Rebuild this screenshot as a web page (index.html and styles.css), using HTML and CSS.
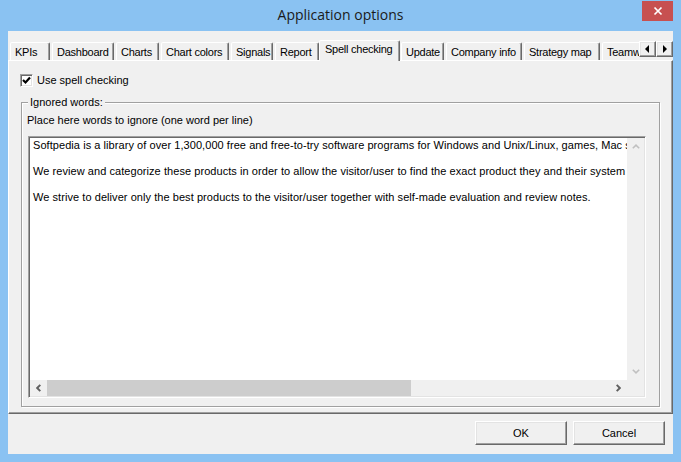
FILE: index.html
```html
<!DOCTYPE html>
<html>
<head>
<meta charset="utf-8">
<title>Application options</title>
<link rel="stylesheet" href="styles.css">
</head>
<body>
<div class="window">
  <div class="titlebar">
    <div class="title">Application options</div>
    <button class="close" aria-label="Close">
      <svg width="10" height="10" viewBox="0 0 10 10"><path d="M1.5 1.5 L8.5 8.5 M8.5 1.5 L1.5 8.5" stroke="#fff" stroke-width="1.7" fill="none"/></svg>
    </button>
  </div>
  <div class="client">
    <div class="tabstrip">
      <div class="tabs">
        <div class="tab">KPIs</div>
        <div class="tab">Dashboard</div>
        <div class="tab">Charts</div>
        <div class="tab">Chart colors</div>
        <div class="tab">Signals</div>
        <div class="tab">Report</div>
        <div class="tab active">Spell checking</div>
        <div class="tab">Update</div>
        <div class="tab">Company info</div>
        <div class="tab">Strategy map</div>
        <div class="tab">Teamwork</div>
      </div>
      <div class="tabnav">
        <button class="navbtn" aria-label="Previous"><svg width="5" height="8" viewBox="0 0 5 8"><path d="M4 0 L0 4 L4 8 Z" fill="#000"/></svg></button>
        <button class="navbtn" aria-label="Next"><svg width="5" height="8" viewBox="0 0 5 8"><path d="M1 0 L5 4 L1 8 Z" fill="#000"/></svg></button>
      </div>
    </div>
    <div class="panel">
      <label class="check">
        <span class="box"><svg width="9" height="9" viewBox="0 0 9 9"><path d="M1 4 L3.5 6.5 L8 1.5" stroke="#000" stroke-width="2.2" fill="none"/></svg></span>
        <span>Use spell checking</span>
      </label>
      <fieldset class="group">
        <legend>Ignored words:</legend>
        <div class="hint">Place here words to ignore (one word per line)</div>
        <div class="memo">
          <div class="memo-text">
            <p>Softpedia is a library of over 1,300,000 free and free-to-try software programs for Windows and Unix/Linux, games, Mac software, Windows drivers, mobile devices and IT-related articles.</p>
            <p>We review and categorize these products in order to allow the visitor/user to find the exact product they and their system needs.</p>
            <p>We strive to deliver only the best products to the visitor/user together with self-made evaluation and review notes.</p>
          </div>
          <div class="vscroll">
            <span class="sbtn"><svg width="8" height="5" viewBox="0 0 8 5"><path d="M0.8 4.3 L4 1.2 L7.2 4.3" stroke="#c0c0c0" stroke-width="1.6" fill="none"/></svg></span>
            <span class="sbtn"><svg width="8" height="5" viewBox="0 0 8 5"><path d="M0.8 0.7 L4 3.8 L7.2 0.7" stroke="#c0c0c0" stroke-width="1.6" fill="none"/></svg></span>
          </div>
          <div class="hscroll">
            <span class="sbtn"><svg width="5" height="8" viewBox="0 0 5 8"><path d="M4.3 0.8 L1.2 4 L4.3 7.2" stroke="#606060" stroke-width="1.9" fill="none"/></svg></span>
            <span class="thumb"></span>
            <span class="track"></span>
            <span class="sbtn"><svg width="5" height="8" viewBox="0 0 5 8"><path d="M0.7 0.8 L3.8 4 L0.7 7.2" stroke="#606060" stroke-width="1.9" fill="none"/></svg></span>
          </div>
          <div class="corner"></div>
        </div>
      </fieldset>
    </div>
    <div class="footer">
      <button class="btn">OK</button>
      <button class="btn">Cancel</button>
    </div>
  </div>
</div>
</body>
</html>
```

FILE: styles.css
```css
* { box-sizing: border-box; }

body {
  margin: 0;
  background: #8ac2f2;
}

.window {
  width: 681px;
  height: 462px;
  background: #8ac2f2;
  padding: 0 8px 8px;
  display: flex;
  flex-direction: column;
  font-family: "Liberation Sans", Arial, sans-serif;
  font-size: 11px;
  color: #000;
}

/* ---------- title bar ---------- */
.titlebar {
  height: 31px;
  flex: none;
  display: grid;
  grid-template-columns: 1fr auto 1fr;
}

.title {
  grid-column: 2;
  font-family: "Open Sans", "Noto Sans", sans-serif;
  font-size: 14px;
  line-height: 30px;
  color: #1a1a1a;
  white-space: nowrap;
}

.close {
  grid-column: 3;
  justify-self: end;
  align-self: start;
  margin-top: 1px;
  width: 31px;
  height: 20px;
  border: 0;
  padding: 0;
  background: #c75050;
  display: flex;
  align-items: center;
  justify-content: center;
}

/* ---------- client ---------- */
.client {
  flex: 1;
  background: #f0f0f0;
  display: flex;
  flex-direction: column;
}

.tabstrip {
  height: 30px;
  margin-bottom: -1px;
  display: flex;
  flex: none;
  padding-left: 2px;
}

.tabs {
  flex: 1;
  min-width: 0;
  display: flex;
  align-items: flex-start;
  overflow: hidden;
  height: 30px;
}

.tab {
  flex: none;
  height: 18px;
  margin-top: 11px;
  margin-right: 2px;
  padding: 1px 0 0 4px;
  border: 1px solid;
  border-bottom: 0;
  border-color: #fff #696969 transparent #fff;
  border-radius: 2px 2px 0 0;
  box-shadow: inset -1px 0 0 #a0a0a0;
  background: #f0f0f0;
  line-height: 16px;
  letter-spacing: -0.25px;
  white-space: nowrap;
  overflow: hidden;
}

.tab:nth-child(1) { width: 40px; }
.tab:nth-child(2) { width: 62px; }
.tab:nth-child(3) { width: 43px; }
.tab:nth-child(4) { width: 68px; }
.tab:nth-child(5) { width: 42px; }
.tab:nth-child(6) { width: 44px; }
.tab:nth-child(8) { width: 43px; }
.tab:nth-child(9) { width: 76px; }
.tab:nth-child(10) { width: 76px; }
.tab:nth-child(11) { width: 80px; }

.tab.active {
  width: 81px;
  height: 21px;
  margin-top: 9px;
  margin-left: -2px;
  margin-right: 1px;
  padding: 0 0 0 5px;
  position: relative;
  z-index: 1;
}

.tabnav {
  flex: none;
  display: flex;
  margin-top: 10px;
  height: 16px;
}

.navbtn {
  width: 17px;
  height: 16px;
  padding: 0;
  border: 1px solid;
  border-color: #fff #696969 #696969 #fff;
  box-shadow: inset -1px -1px 0 #a0a0a0, inset 1px 1px 0 #e3e3e3;
  background: #f0f0f0;
  display: flex;
  align-items: center;
  justify-content: center;
}

/* ---------- panel ---------- */
.panel {
  flex: 1;
  border: 1px solid;
  border-color: #fff #696969 #696969 #fff;
  box-shadow: inset -1px -1px 0 #a0a0a0;
  padding: 13px 0 0 11px;
}

.check {
  display: flex;
  align-items: center;
  gap: 4px;
  height: 13px;
  line-height: 13px;
}

.box {
  width: 13px;
  height: 13px;
  border: 1px solid;
  border-color: #a0a0a0 #fff #fff #a0a0a0;
  box-shadow: inset 1px 1px 0 #696969, inset -1px -1px 0 #e3e3e3;
  background: #fff;
  display: flex;
  align-items: center;
  justify-content: center;
}

.group {
  margin: 8px 0 0 1px;
  width: 639px;
  padding: 0 0 8px 6px;
  border: 1px solid #a0a0a0;
  box-shadow: 1px 1px 0 #fff, inset 1px 1px 0 #fff;
  min-width: 0;
}

.group legend {
  padding: 0 2px;
  line-height: 14px;
  background: #f0f0f0;
}

.hint {
  margin: 5px 0 0 -1px;
  line-height: 13px;
}

.memo {
  margin-top: 9px;
  width: 618px;
  height: 262px;
  border: 1px solid;
  border-color: #a0a0a0 #fff #fff #a0a0a0;
  box-shadow: inset 1px 1px 0 #696969, inset -1px -1px 0 #e3e3e3;
  padding: 1px;
  background: #fff;
  display: grid;
  grid-template-columns: 1fr 17px;
  grid-template-rows: 1fr 16px;
}

.memo-text {
  overflow: hidden;
  white-space: nowrap;
  padding: 1px 5px 0 3px;
  line-height: 13px;
  letter-spacing: 0.06px;
  min-width: 0;
}

.memo-text p {
  margin: 0 0 13px;
}

.vscroll {
  background: #f0f0f0;
  display: flex;
  flex-direction: column;
  justify-content: space-between;
}

.sbtn {
  width: 17px;
  height: 17px;
  display: flex;
  align-items: center;
  justify-content: center;
  flex: none;
}

.hscroll {
  background: #f0f0f0;
  display: flex;
}

.hscroll .sbtn { height: 16px; }

.thumb {
  width: 364px;
  background: #cdcdcd;
  flex: none;
}

.track { flex: 1; }

.corner { background: #f0f0f0; }

/* ---------- footer ---------- */
.footer {
  height: 40px;
  flex: none;
  display: flex;
  justify-content: flex-end;
  align-items: flex-start;
  gap: 6px;
  padding: 7px 8px 0 0;
}

.btn {
  width: 92px;
  height: 24px;
  font: inherit;
  color: #000;
  background: #f0f0f0;
  border: 1px solid;
  border-color: #fff #696969 #696969 #fff;
  box-shadow: inset -1px -1px 0 #a0a0a0, inset 1px 1px 0 #e3e3e3;
  padding: 0;
}
```
